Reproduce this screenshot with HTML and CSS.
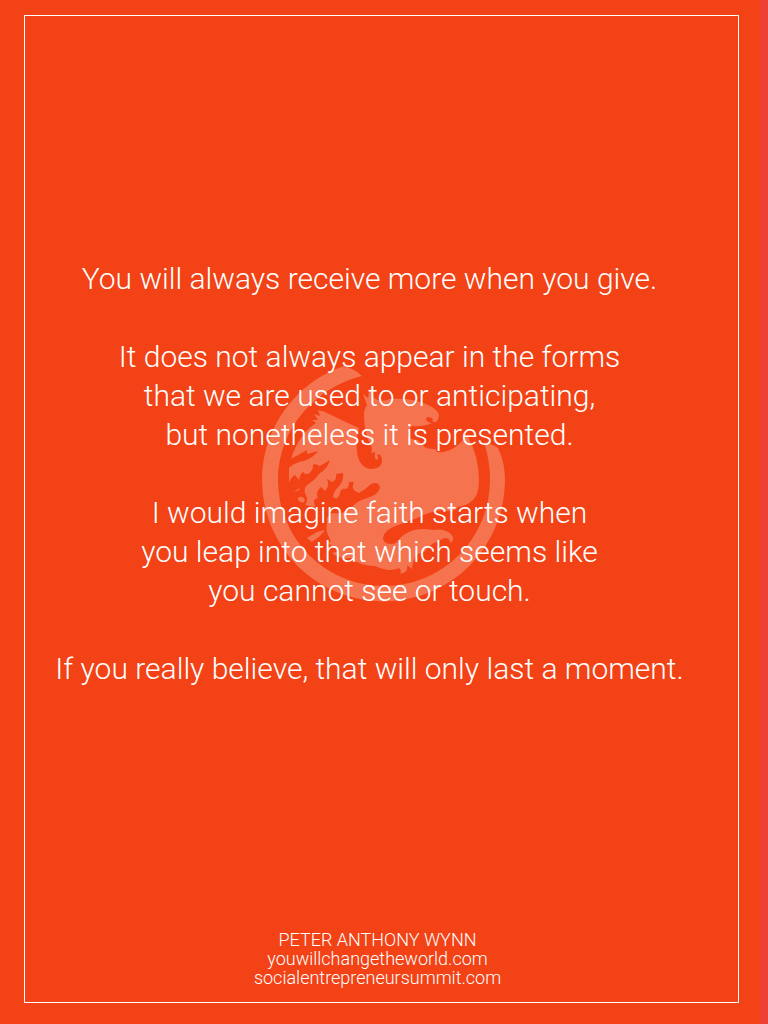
FILE: index.html
```html
<!DOCTYPE html>
<html lang="en">
<head>
<meta charset="utf-8">
<meta name="viewport" content="width=device-width, initial-scale=1">
<title>You will always receive more when you give</title>
<link rel="stylesheet" href="styles.css">
</head>
<body>
<main class="poster">
  <section class="message">
    <svg class="emblem" viewBox="262 357 244 244" aria-hidden="true">
      <path class="light" d="M344 364C298 379 262 424 262 478A121.500 121.500 0 0 0 505 478Q505 461 498 446Q492 442 484 440Q490 459 490 478A106 106 0 0 1 278 478C278 428 314 386 362 374Q353 366 344 364Z"/>
      <path class="light" d="M289 467Q292 448 301 436Q306 428 316 421L312 418L318 418L314 412L320 414L318 408L325 410Q343 419 359 426Q356 437 357 450Q359 465 370 467Q382 467 382 458Q381 451 377 453Q379 456 377 458Q374 457 375 450L371 451Q373 445 370 442Q364 430 364 414Q364 407 367 403L363 392L368 396L370 385L374 396Q381 401 390 397Q407 396 420 400Q437 405 439 413Q439 417 436 420Q431 420 433 417Q427 413 426 417Q426 420 432 421Q423 425 412 424Q406 430 409 436Q413 438 418 438Q424 448 435 447L437 450Q453 452 467 433Q479 454 479 478Q479 486 477 492Q472 503 458 505Q455 511 442 508Q428 510 417 516Q404 521 393 525Q383 530 383 537Q385 544 396 541Q403 531 414 528Q424 526 433 528Q444 526 451 532Q456 538 450 541Q450 536 445 536Q432 540 424 550Q413 551 412 567L407 563Q409 570 400 572Q402 569 399 566Q390 571 375 564Q360 564 351 556Q340 558 332 551L339 549L328 541L331 539Q325 529 327 522Q328 515 324 511L315 505L305 503Q298 505 297 498Q298 494 303 495Q306 492 304 487L289 491Z"/>
      <path class="light" d="M307 536L317 530L325 528L320 534L312 540Z"/>
      <path class="dark" d="M288 458Q299 453 307 448L307 452L318 449Q313 456 304 459Q296 460 288 466ZM287 486Q291 474 295 473L299 478Q300 472 303 470Q308 476 313 466Q312 462 315 462L320 464L330 458Q328 466 319 472Q314 479 307 483Q302 489 306 493Q310 501 300 507Q294 502 297 495Q299 502 304 500Q306 496 302 495Q297 490 300 486L293 490L287 500ZM306 514L315 504Q312 497 318 496Q315 490 321 485L325 489Q330 484 327 477L332 480Q337 478 336 472L343 471Q344 479 339 484Q333 490 333 495Q338 499 340 491Q341 486 346 487Q349 486 349 480L354 480Q350 488 359 491Q366 487 371 482Q379 479 380 486Q378 493 367 496Q357 499 352 505Q344 513 332 511Q325 515 325 524L316 527Z"/>
    </svg>
    <p>You will always receive more when you give.</p>
    <p>It does not always appear in the forms<br>that we are used to or anticipating,<br>but nonetheless it is presented.</p>
    <p>I would imagine faith starts when<br>you leap into that which seems like<br>you cannot see or touch.</p>
    <p>If you really believe, that will only last a moment.</p>
  </section>
  <footer class="credits">
    <div>PETER ANTHONY WYNN</div>
    <div>youwillchangetheworld.com</div>
    <div>socialentrepreneursummit.com</div>
  </footer>
</main>
</body>
</html>
```
FILE: styles.css
```css
* { box-sizing: border-box; }
body {
  margin: 0;
  min-height: 100vh;
  display: flex;
  padding: 15px 21px 21px 24px;
  background: #f24216;
  border-right: 8px solid #ee4136;
  color: #fff;
  font-family: Roboto, "Liberation Sans", sans-serif;
  font-weight: 300;
}
.poster {
  flex: 1;
  display: flex;
  flex-direction: column;
  border: 1px solid #fff;
  text-align: center;
}
.message {
  position: relative;
  flex: 1;
  display: flex;
  flex-direction: column;
  justify-content: center;
  gap: 39px;
  padding: 0 24px 0 0;
  font-size: 30px;
  line-height: 39px;
}
.message p { position: relative; margin: 0; }
.emblem {
  position: absolute;
  left: calc(50% + 2px);
  top: calc(50% + 8px);
  width: 244px;
  height: 244px;
  transform: translate(-50%, -50%);
}
.light { fill: #f5734f; }
.dark { fill: #f24216; }
.credits {
  padding: 0 8px 15px 0;
  font-size: 18px;
  line-height: 19px;
}
```
